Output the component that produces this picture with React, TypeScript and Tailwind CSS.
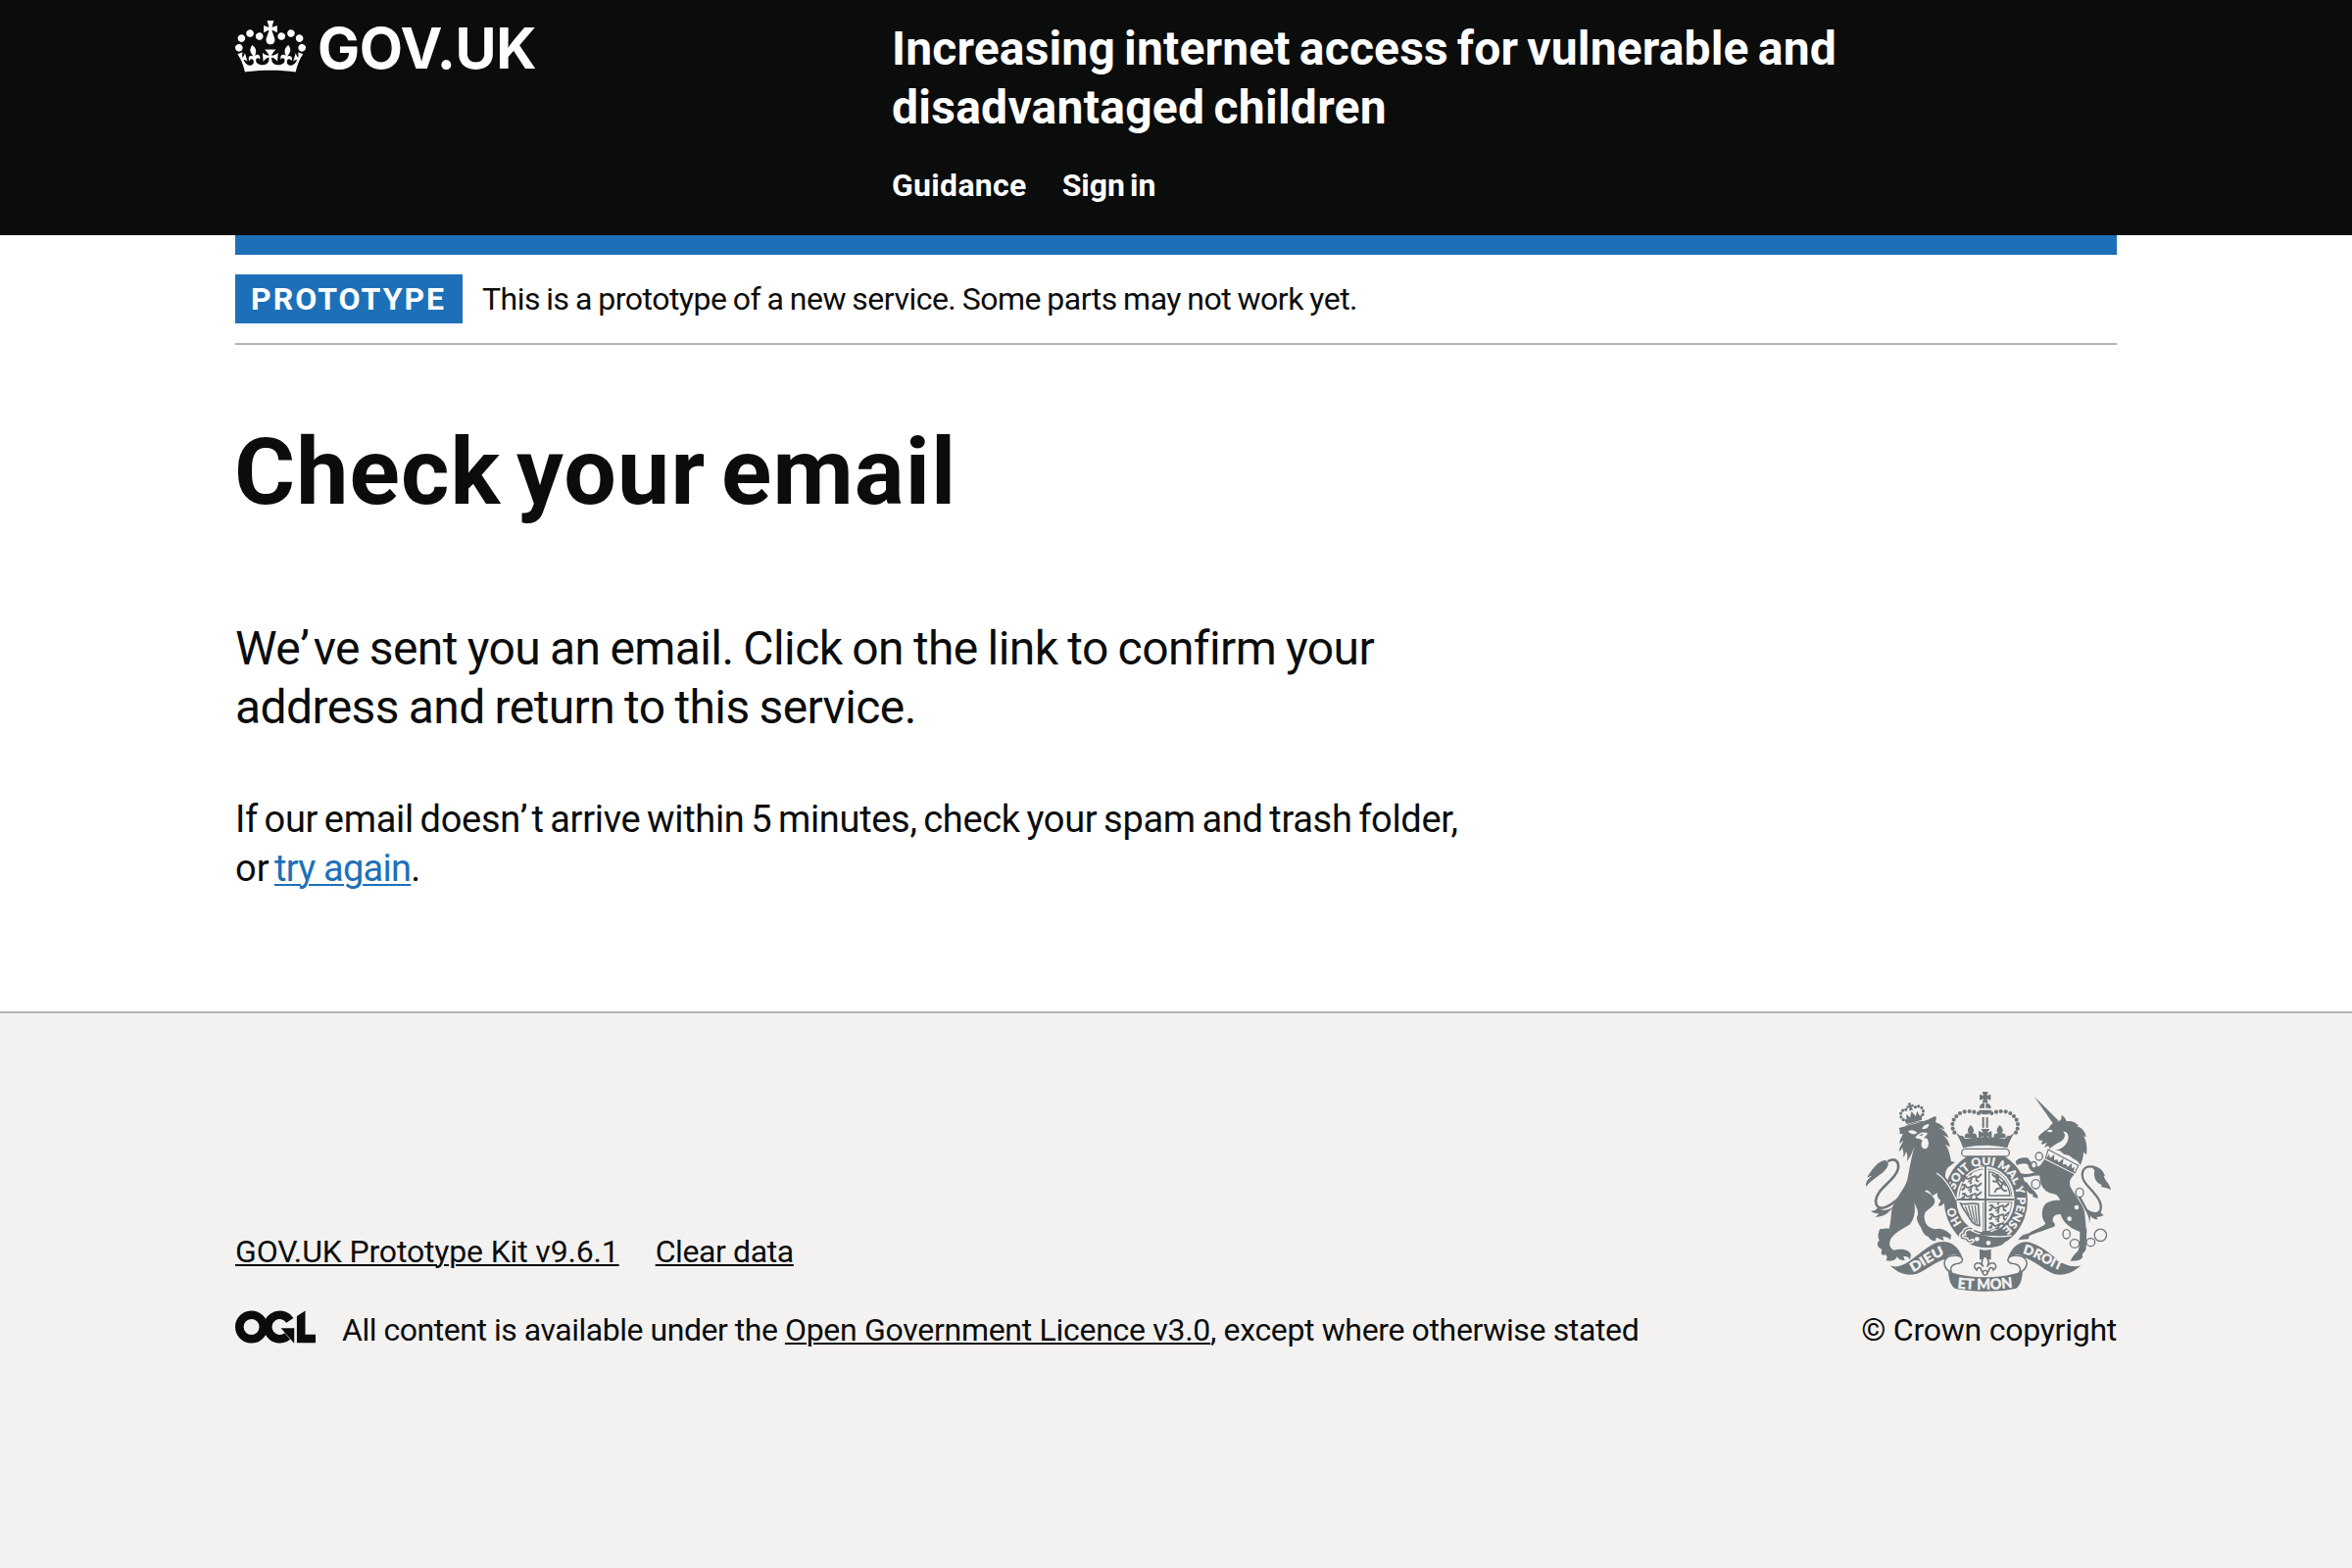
const GREY = "#6f777b";
const PAPER = "#f3f2f1";

function HeaderCrown() {
  return (
    <svg viewBox="0 0 132 97" className="h-[53px] w-[72px] shrink-0" fill="currentColor" aria-hidden="true">
      <path
        fillRule="evenodd"
        d="M25 30.2c3.5 1.5 7.7-.2 9.1-3.7 1.5-3.6-.2-7.8-3.9-9.2-3.6-1.4-7.6.3-9.1 3.9-1.4 3.5.3 7.5 3.9 9zM9 39.5c3.6 1.5 7.8-.2 9.2-3.7 1.5-3.6-.2-7.8-3.9-9.1-3.6-1.5-7.6.2-9.1 3.8-1.4 3.5.3 7.5 3.8 9zM4.4 57.2c3.5 1.5 7.7-.2 9.1-3.8 1.5-3.6-.2-7.7-3.9-9.1-3.5-1.5-7.6.3-9.1 3.8-1.4 3.5.3 7.6 3.9 9.1zm38.3-21.4c3.5 1.5 7.7-.2 9.1-3.8 1.5-3.6-.2-7.7-3.9-9.1-3.6-1.5-7.6.3-9.1 3.8-1.3 3.6.4 7.7 3.9 9.1zm64.4-5.6c-3.6 1.5-7.8-.2-9.1-3.7-1.5-3.6.2-7.8 3.8-9.2 3.6-1.4 7.7.3 9.2 3.9 1.3 3.5-.4 7.5-3.9 9zm15.9 9.3c-3.6 1.5-7.7-.2-9.1-3.7-1.5-3.6.2-7.8 3.7-9.1 3.6-1.5 7.7.2 9.2 3.8 1.5 3.5-.3 7.5-3.8 9zm4.7 17.7c-3.6 1.5-7.8-.2-9.2-3.8-1.5-3.6.2-7.7 3.9-9.1 3.6-1.5 7.7.3 9.2 3.8 1.3 3.5-.4 7.6-3.9 9.1zM89.3 35.8c-3.6 1.5-7.8-.2-9.2-3.8-1.4-3.6.2-7.7 3.9-9.1 3.6-1.5 7.7.3 9.2 3.8 1.4 3.6-.3 7.7-3.9 9.1zM69.7 17.7l8.9 4.7V9.3l-8.9 2.8c-.2-.3-.5-.6-.9-.9L72.4 0H59.6l3.5 11.2c-.3.3-.6.5-.9.9l-8.8-2.8v13.1l8.8-4.7c.3.3.6.7.9.9l-5 15.4v.1c-.2.8-.4 1.6-.4 2.4 0 4.1 3.1 7.5 7 8.1h.2c.3 0 .7.1 1 .1.4 0 .7 0 1-.1h.2c4-.6 7.1-4.1 7.1-8.1 0-.8-.1-1.7-.4-2.4V34l-5.1-15.4c.4-.2.7-.6 1-.9zM66 92.8c16.9 0 32.8 1.1 47.1 3.2 4-16.9 8.9-26.7 14-33.5l-9.6-3.4c1 4.9 1.1 7.2 0 10.2-1.5-1.4-3-4.3-4.2-8.7L108.6 76c2.8-2 5-3.2 7.5-3.3-4.4 9.4-10 11.9-13.6 11.2-4.3-.8-6.3-4.6-5.6-7.9 1-4.7 5.7-5.9 8-.5 4.3-8.7-3-11.4-7.6-8.8 7.1-7.2 7.9-13.5 2.1-21.1-8 6.1-8.1 12.3-4.5 20.8-4.7-5.4-12.1-2.5-9.5 6.2 3.4-5.2 7.9-2 7.2 3.1-.6 4.3-6.4 7.8-13.5 7.2-10.3-.9-10.9-8-11.2-13.8 2.5-.5 7.1 1.8 11 7.3L80.2 60c-4.1 4.4-8 5.3-12.3 5.4 1.4-4.4 8-11.6 8-11.6H55.5s6.4 7.2 7.9 11.6c-4.2-.1-8-1-12.3-5.4l1.4 16.4c3.9-5.5 8.5-7.7 10.9-7.3-.3 5.8-.9 12.8-11.1 13.8-7.2.6-12.9-2.9-13.5-7.2-.7-5 3.8-8.3 7.1-3.1 2.7-8.7-4.6-11.6-9.4-6.2 3.7-8.5 3.6-14.7-4.6-20.8-5.8 7.6-5 13.9 2.2 21.1-4.7-2.6-11.9.1-7.7 8.8 2.3-5.5 7.1-4.2 8.1.5.7 3.3-1.3 7.1-5.7 7.9-3.5.7-9-1.8-13.5-11.2 2.5.1 4.7 1.3 7.5 3.3l-4.7-15.4c-1.2 4.4-2.7 7.2-4.3 8.7-1.1-3-.9-5.3 0-10.2l-9.5 3.4c5 6.9 9.9 16.7 14 33.5 14.8-2.1 30.8-3.2 47.7-3.2z"
      />
    </svg>
  );
}

/* Interlocked rings with an arrow and an angled bar. */
function LicenceLogo() {
  return (
    <svg viewBox="0 0 483.2 195.7" className="h-[34px] w-[82px] shrink-0" aria-label="OGL">
      <g fill="none" stroke="#0b0c0c" strokeWidth="50.7">
        <circle cx="97.8" cy="97.8" r="72.4" />
        <path d="M329 58.500A72.400 72.400 0 1 0 314 154" />
      </g>
      <g fill="#0b0c0c">
        <polygon points="274.900,105.700 354.900,105.700 354.900,193.500 351.900,193.500" />
        <polygon points="370.800,32.400 421.500,0 421.500,142.800 483.200,142.800 483.200,193.500 370.800,193.500" />
      </g>
    </svg>
  );
}

const LEFT_BEADS = [
  [417, 138], [403, 134], [389, 132], [374, 133], [360, 138], [349, 147],
  [341, 158], [337, 171], [338, 185], [343, 197],
];

function StateCrown() {
  return (
    <g>
      {LEFT_BEADS.map(([x, y]) => (
        <g key={`${x}-${y}`}>
          <circle cx={x} cy={y} r="6.2" />
          <circle cx={874 - x} cy={y} r="6.2" />
        </g>
      ))}
      <path d="M428 72h18l-4 12 12-4v18l-12-4 4 11h-18l4-11-12 4V80l12 4z" />
      <path d="M419 122c1-10 8-15 16-16v16zM439 106c8 1 15 6 17 16h-17zM417 128h40c-2 9-9 14-20 14s-18-5-20-14z" />
      <path d="M428 150h6v32h-6zM440 150h6v32h-6z" />
      <path d="M424 186h27l-8 12 14-6v22l-14-6 2 10h-16l2-10-14 6v-22l15 6z" />
      <path d="M393 174c12 12 11 20 4 27 8-4 16 0 14 12h-36c-2-12 6-16 14-12-7-7-8-15 4-27zM482 174c12 12 11 20 4 27 8-4 16 0 14 12h-36c-2-12 6-16 14-12-7-7-8-15 4-27z" />
      <path d="M348 198c10 4 10 12 20 8l8 10q61-10 122 0l8-10c10 4 10-4 20-8-8 14-16 28-21 46-46-10-90-10-136 0-5-18-13-32-21-46z" />
      <rect x="365" y="247" width="146" height="23" rx="11.500" fill={PAPER} stroke={GREY} strokeWidth="4" />
    </g>
  );
}

function PassantLions({ x, y }: { x: number; y: number }) {
  return (
    <g transform={`translate(${x} ${y})`} fill="none" stroke={GREY} strokeWidth="5.500">
      {[0, 27, 54].map((dy) => (
        <path
          key={dy}
          d={`M2 ${dy + 4}q8-6 12 2t14 2 16-3 12-3l6-6m-16 12v8l8 3m-22-12-3 10-8 2m-10-14-3 8-8 4M2 ${dy + 18}l7-4m17-15 6-5m6 10 8-2`}
        />
      ))}
    </g>
  );
}

function Garter() {
  return (
    <g>
      <ellipse cx="438" cy="402" rx="135" ry="153" fill={PAPER} />
      <ellipse cx="439" cy="402" rx="128" ry="147" />
      <ellipse cx="438" cy="402" rx="89" ry="101" fill={PAPER} />
      <path d="M438 300v204M350 402h176" stroke={GREY} strokeWidth="6" fill="none" />
      <path d="M431 309c-42 4-70 37-74 85M445 309c42 4 70 37 74 85M445 410h74c-4 42-30 78-70 88M431 410v88" fill="none" stroke={GREY} strokeWidth="2.500" />
      <PassantLions x={364} y={328} />
      <PassantLions x={448} y={418} />
      {/* Rampant lion in its bordered quarter */}
      <path d="M449 316v74h64c-2-33-28-64-64-74z" fill="none" stroke={GREY} strokeWidth="4" />
      <path d="M458 324l8 8 10-4 2 14 12 10 8-6M478 342l-12 6-6-4M490 352l-4 14-14 4-6 10M486 366l10 10 8-2M492 352l10 8M470 330l4 18 12 16" fill="none" stroke={GREY} strokeWidth="5.500" />
      {/* Harp */}
      <path d="M362 414c14 6 34-4 54 2l4 66c-14-2-24-10-30-22-8-16-20-26-28-46z" fill="none" stroke={GREY} strokeWidth="5" />
      <path d="M376 422l12 30M386 420l12 46M396 420l10 54M406 420l6 56" fill="none" stroke={GREY} strokeWidth="4" />
      {/* Strap and buckle */}
      <path d="M362 488c30 30 90 42 150 26l-22 26c-50 22-110 4-142-34z" />
      <path d="M396 498c40 18 80 22 122 14" fill="none" stroke={PAPER} strokeWidth="4" />
      <path d="M430 498h22l12 14h-46z" />
      <circle cx="412" cy="523" r="7" fill={PAPER} />
      <circle cx="447" cy="535" r="7" fill={PAPER} />
      <path d="M398 492c-16-6-28 6-26 14-8 0-12 8-6 14 6 2 10 2 14 4 2 8 12 10 18 4" fill="none" stroke={PAPER} strokeWidth="13" strokeLinecap="round" />
      <path d="M398 492c-16-6-28 6-26 14-8 0-12 8-6 14 6 2 10 2 14 4 2 8 12 10 18 4" fill="none" stroke={GREY} strokeWidth="4" />
      <path id="motto" d="M366 473A97 106 0 1 1 486 494" fill="none" />
      <text fill={PAPER} stroke={PAPER} strokeWidth="0.8" fontFamily="Lato, sans-serif" fontWeight="900" fontSize="35">
        <textPath href="#motto">
          <tspan textLength="55" lengthAdjust="spacingAndGlyphs">HO</tspan>
          <tspan x="106" textLength="394" lengthAdjust="spacingAndGlyphs">SOIT QUI MAL Y PENSE</tspan>
        </textPath>
      </text>
    </g>
  );
}

function Lion() {
  return (
    <g transform="translate(45 45)">
      {/* Tail */}
      <path d="M94 240C122 226 138 250 116 282C96 310 60 330 57 360C57 390 82 394 132 350" fill="none" stroke={GREY} strokeWidth="8" />
      <path d="M27 318C26 302 32 294 46 284C40 286 34 288 30 290C44 268 62 240 84 237C98 238 98 250 90 262C78 280 44 296 27 318z" />
      <path d="M42 392C54 392 60 388 64 380C74 392 90 394 112 378C98 396 88 408 56 411C60 408 64 404 66 400C58 400 48 398 42 392z" />
      {/* Body, mane and limbs */}
      <path d="M128 138L150 132C180 124 210 118 238 102L243 106L240 121C252 124 264 132 268 142L252 138C266 144 276 154 280 168L264 160C276 172 284 184 284 196L270 188C282 204 284 222 288 240L300 243L282 256C272 264 270 276 270 288C284 304 296 330 301 352C306 368 302 380 297 387C292 378 286 374 280 374L284 387C274 384 268 378 266 368C260 376 254 378 248 376L256 360C246 352 244 344 246 336L230 346C226 338 222 332 212 328L206 334L196 328C214 334 232 342 238 360C238 384 208 386 206 404C204 428 216 444 238 448C252 442 276 450 288 466L286 480C278 472 270 470 262 470L266 483C254 480 248 474 242 474L240 484C228 484 222 478 218 470C208 470 200 456 196 444C186 428 178 414 186 404C188 390 180 378 175 366C180 392 174 420 160 434C140 446 110 462 103 478C96 494 100 506 112 512C134 506 160 510 165 526L162 541C156 532 150 530 142 532L146 543C134 544 126 540 122 532C118 544 106 548 88 543C94 536 92 530 86 526C74 530 72 522 76 510C66 506 60 498 63 488L68 482C62 472 64 460 70 446C76 450 80 444 98 446C108 410 100 396 112 372C128 340 152 316 156 286C160 262 166 232 172 208L176 196C168 210 166 226 152 240C156 228 154 218 150 210C148 218 146 224 141 228C144 214 140 206 138 198C136 204 132 208 129 210C128 196 138 188 141 176L131 186C128 172 138 166 140 156L130 156C132 148 130 144 128 138z" />
      {/* Foreleg separation */}
      <path d="M243 276C268 290 286 320 304 358" fill="none" stroke={PAPER} strokeWidth="4" />
      {/* Face */}
      <path d="M156 148C166 142 176 144 184 152C176 160 164 158 156 148zM198 140C204 130 212 126 220 126C220 136 210 144 198 140zM178 168C188 150 206 150 216 154C212 162 210 164 204 168L214 170C222 180 220 200 208 202C196 200 194 188 200 176C192 170 186 172 178 168z" fill={PAPER} />
      <path d="M188 160L204 156L198 162z" />
      {/* Crown */}
      <g transform="rotate(-15 172 112)">
        {[[142, 105], [138, 95], [140, 84], [148, 77], [158, 77], [188, 77], [198, 77], [206, 84], [208, 95], [204, 105]].map(([x, y]) => (
          <circle key={`${x}-${y}`} cx={x} cy={y} r="4.800" />
        ))}
        <path d="M168 60h10l-2 8 8-2v9l-8-2 3 10h-12l3-10-8 2v-9l8 2z" />
        <path d="M144 104l8 2 4-16 8 14 9-18 9 18 8-14 4 16 8-2-5 16h-48z" />
        <path d="M147 125c18-4 34-4 52 0" fill="none" stroke={GREY} strokeWidth="3" />
      </g>
    </g>
  );
}

function Unicorn() {
  return (
    <g transform="translate(480 45)">
      {/* Tail */}
      <path d="M292 258C252 248 244 284 268 312C292 338 318 364 310 390C304 402 286 404 268 390L244 346" fill="none" stroke={GREY} strokeWidth="7" />
      <path d="M280 254C310 254 320 272 324 286L320 286C324 300 340 310 342 328C330 320 320 320 312 318L314 312C294 306 288 286 292 268z" />
      <path d="M262 388C280 404 300 404 308 388C310 398 314 402 320 404C312 410 304 410 298 410L302 418C290 418 282 412 280 406L276 430C276 412 270 400 262 388z" />
      {/* Horn and head */}
      <path d="M107 41L182 116L166 126z" />
      <path d="M120 164C130 152 142 146 152 138C158 126 168 120 182 118L190 112L191 98C200 104 204 112 206 118C222 114 236 122 243 132L236 133C252 136 264 148 266 166L258 163C268 178 270 200 267 220L258 212C258 226 254 240 248 252C244 242 236 236 226 232L214 222L198 218L186 208L172 206C188 204 212 190 212 164C210 154 204 148 196 150C206 160 200 174 184 182C170 188 160 196 152 204C156 196 152 192 146 194L138 198L146 182C138 186 134 190 128 186L134 176L122 176z" />
      <path d="M146 148c8-6 14-6 18 0-6 4-12 4-18 0z" fill={PAPER} />
      {/* Body and legs */}
      <path d="M138 234L230 280C220 290 212 300 218 318C234 350 262 376 262 402L266 444L268 448L266 508C262 520 250 524 256 532C250 544 236 546 218 545C224 532 230 524 240 516C248 500 246 480 247 456L228 448C212 438 194 424 188 402C170 400 162 412 164 424C172 430 172 438 168 440C140 450 110 460 92 468L90 478L58 481C68 466 76 464 92 460C108 448 138 440 142 430C128 414 128 390 140 372C152 362 170 358 186 360C182 344 172 338 158 338C136 330 124 312 124 284C104 280 88 292 74 288C70 296 76 302 86 306C94 320 108 328 118 346L118 354L102 348L104 342C88 340 84 328 80 322L70 314C64 302 56 292 54 282L66 276C82 282 96 278 110 274C96 272 90 262 88 250C78 244 66 246 54 252L50 240C60 228 74 228 88 230C96 240 102 250 116 256C126 256 132 244 138 234z" />
      {/* Coronet collar */}
      <path d="M150 204L242 253L232 275L142 230z" fill={PAPER} stroke={GREY} strokeWidth="3.500" />
      <path transform="translate(142 230) rotate(27)" d="M2 0l2-16 8 10 7-16 7 16 8-6 8 6 7-18 7 18 8-6 8 6 7-16 7 14 6-8 4 18z" />
      {/* Chain */}
      <g fill={PAPER} stroke={GREY} strokeWidth="4">
        <ellipse cx="122" cy="225" rx="11" ry="12" />
        <ellipse cx="106" cy="251" rx="8" ry="10" />
        <ellipse cx="112" cy="310" rx="13" ry="14" />
        <ellipse cx="246" cy="336" rx="12" ry="14" />
        <circle cx="237" cy="381" r="9" />
        <circle cx="215" cy="416" r="9" />
        <ellipse cx="206" cy="463" rx="11" ry="14" />
        <ellipse cx="231" cy="492" rx="14" ry="13" />
        <ellipse cx="280" cy="488" rx="13" ry="12" />
        <circle cx="310" cy="466" r="18.500" />
      </g>
    </g>
  );
}

function Scroll() {
  return (
    <g>
      {/* Stem and lily */}
      <path d="M420 554c12 4 22 4 35 0v32h-35z" />
      <path d="M437 572c12 14 14 24 6 36 8-16 26-16 27 0-1 6-4 8-8 10 0-10-12-10-14 2l-5 8h-12l-5-8c-2-12-14-12-14-2-4-2-7-4-8-10 1-16 19-16 27 0-8-12-6-22 6-36z" fill={PAPER} stroke={GREY} strokeWidth="4.500" />
      <circle cx="437" cy="626" r="7" fill={PAPER} stroke={GREY} strokeWidth="4" />
      {/* Curls */}
      <path d="M344 574C368 572 376 592 356 598C334 600 328 612 334 624C320 622 308 604 314 588C320 576 332 574 344 574zM532 574C506 572 498 592 518 598C542 600 548 612 542 624C556 622 570 604 562 588C556 576 544 574 532 574z" fill={PAPER} stroke={GREY} strokeWidth="4.500" />
      {/* Bands */}
      <path d="M146 604C164 612 186 604 204 592C234 570 258 546 288 534C322 524 354 538 368 582C350 566 326 568 316 584C284 592 256 618 226 630C194 636 170 628 146 604z" />
      <path d="M730 604C712 610 690 606 670 594C640 572 612 546 582 536C552 524 522 538 506 582C526 566 546 568 558 580C592 592 616 618 648 630C680 636 704 628 730 604z" />
      <path d="M324 622C392 646 484 646 552 622C550 646 546 664 532 674C484 686 392 686 344 674C330 664 326 646 324 622z" />
      <path id="scroll-left" d="M214 625C250 608 276 584 322 566" fill="none" />
      <path id="scroll-right" d="M549 567C592 574 628 606 672 621" fill="none" />
      <path id="scroll-mid" d="M350 673Q438 683 526 671" fill="none" />
      <g fill={PAPER} stroke={PAPER} strokeWidth="1" fontFamily="Lato, sans-serif" fontWeight="900" fontSize="40">
        <text>
          <textPath href="#scroll-left" textLength="112" lengthAdjust="spacingAndGlyphs" startOffset="2">DIEU</textPath>
        </text>
        <text>
          <textPath href="#scroll-right" textLength="128" lengthAdjust="spacingAndGlyphs" startOffset="2">DROIT</textPath>
        </text>
        <text fontSize="45">
          <textPath href="#scroll-mid" textLength="170" lengthAdjust="spacingAndGlyphs" startOffset="2">ET MON</textPath>
        </text>
      </g>
    </g>
  );
}

function CoatOfArms() {
  return (
    <svg viewBox="72 72 750 612" className="h-[204px] w-[250px] overflow-visible" fill={GREY} aria-hidden="true">
      <Garter />
      <Unicorn />
      <StateCrown />
      <Lion />
      <Scroll />
    </svg>
  );
}

export default function App() {
  return (
    <div className="flex h-[1600px] w-[2400px] flex-col overflow-hidden bg-white font-['Roboto',sans-serif] text-[#0b0c0c]">
      <header className="h-[240px] bg-[#0b0c0c] px-[240px] text-white">
        <div className="flex">
          <a className="flex w-[670px] shrink-0 pt-[21px]">
            <HeaderCrown />
            <span className="-mt-1 ml-3 font-['Inter',sans-serif] text-[57.5px] leading-[64px] font-bold tracking-[-0.3px]">
              GOV.UK
            </span>
          </a>
          <div className="pt-5">
            <div className="text-[48px] leading-[60px] font-bold whitespace-nowrap">
              <span className="block tracking-[0.16px] [word-spacing:-3px]">Increasing internet access for vulnerable and</span>
              <span className="block tracking-[0.26px] [word-spacing:-3px]">disadvantaged children</span>
            </div>
            <nav className="mt-[29px] flex gap-[36px] text-[32px] leading-[40px] font-bold">
              <a className="tracking-[0.3px]">Guidance</a>
              <a className="tracking-[0px] [word-spacing:-3px]">Sign in</a>
            </nav>
          </div>
        </div>
      </header>

      <div className="mx-[240px]">
        <div className="h-5 bg-[#1d70b8]" />
        <div className="flex h-[92px] items-start gap-5 border-b-2 border-[#b1b4b6] pt-5">
          <strong className="h-[50px] w-[232px] bg-[#1d70b8] pt-[5px] pl-4 text-[32px] leading-[40px] font-bold tracking-[2px] text-white">
            PROTOTYPE
          </strong>
          <span className="pt-[5px] text-[32px] leading-[40px] tracking-[-0.52px] [word-spacing:-1px]">
            This is a prototype of a new service. Some parts may not work yet.
          </span>
        </div>
      </div>

      <main className="mx-[240px] h-[680px] pt-[80px] whitespace-nowrap">
        <h1 className="-ml-px text-[95px] leading-[100px] font-bold tracking-[1.1px] [word-spacing:-9px]">
          Check your email
        </h1>
        <p className="mt-[100px] text-[48px] leading-[60px]">
          <span className="block tracking-[-0.6px] [word-spacing:-1.4px]">
            We<span className="tracking-[4px]">’</span>ve sent you an email. Click on the link to confirm your
          </span>
          <span className="block tracking-[-0.6px] [word-spacing:-1.4px]">address and return to this service.</span>
        </p>
        <p className="mt-[59px] text-[38px] leading-[50px]">
          <span className="block tracking-[-0.32px] [word-spacing:-2.4px]">
            If our email doesn<span className="tracking-[4px]">’</span>t arrive within 5 minutes, check your spam and trash folder,
          </span>
          <span className="block">
            <span className="[word-spacing:-4px]">or </span>
            <a className="tracking-[-0.74px] text-[#1d70b8] underline decoration-2 underline-offset-[3px]">try again</a>.
          </span>
        </p>
      </main>

      <footer className="flex flex-1 items-start justify-between border-t-2 border-[#b1b4b6] bg-[#f3f2f1] px-[240px] text-[32px] leading-[40px] whitespace-nowrap">
        <div className="pt-[223px]">
          <div className="flex gap-[37px]">
            <a className="tracking-[-0.16px] underline decoration-2 underline-offset-2">GOV.UK Prototype Kit v9.6.1</a>
            <a className="tracking-[-0.4px] underline decoration-2 underline-offset-2">Clear data</a>
          </div>
          <div className="mt-10 flex items-start">
            <LicenceLogo />
            <p className="ml-[27px]">
              <span className="tracking-[-0.47px]">All content is available under the </span>
              <a className="tracking-[-0.29px] underline decoration-2 underline-offset-2">Open Government Licence v3.0</a>
              <span className="tracking-[-0.36px]">, except where otherwise stated</span>
            </p>
          </div>
        </div>
        <div className="flex flex-col pt-20">
          <div className="pl-[5px]">
            <CoatOfArms />
          </div>
          <a className="mt-[19px] tracking-[-0.25px]">© Crown copyright</a>
        </div>
      </footer>
    </div>
  );
}
